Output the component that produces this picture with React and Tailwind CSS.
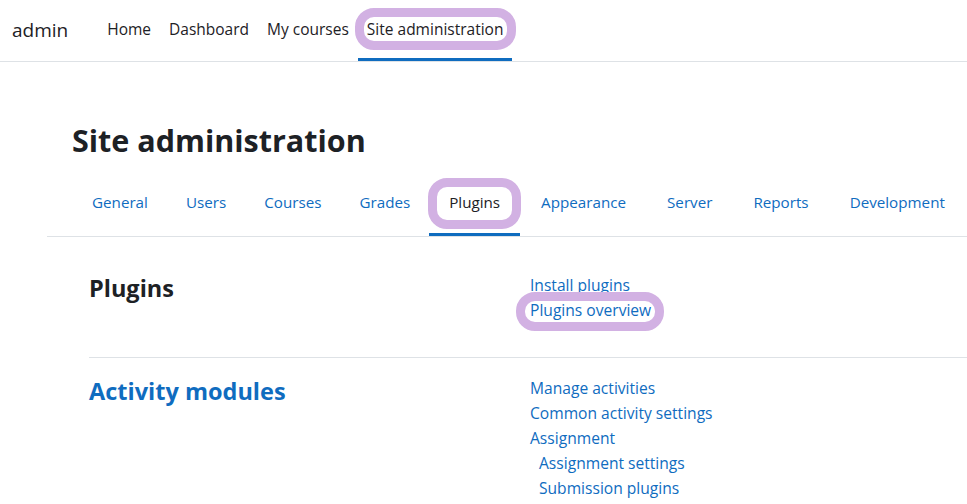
import React from 'react';

const navItems = ['Home', 'Dashboard', 'My courses', 'Site administration'];
const tabs = [
    { label: 'General', pad: 'px-[19px]' },
    { label: 'Users', pad: 'px-[19px]' },
    { label: 'Courses', pad: 'px-[19px]' },
    { label: 'Grades', pad: 'px-[19px]' },
    { label: 'Plugins', pad: 'px-[20px]' },
    { label: 'Appearance', pad: 'px-[21px]' },
    { label: 'Server', pad: 'px-[20px]' },
    { label: 'Reports', pad: 'px-[21px]' },
    { label: 'Development', pad: 'px-[20px]' },
];

const Ring = ({ className }) => (
    <span className={`pointer-events-none absolute rounded-[19px] border-[9px] border-[#d2b1e3] ${className}`} />
);

const App = () => {
    return (
        <div className="w-full min-h-[504px] bg-white text-[#1d2125] overflow-hidden" style={{ fontFamily: '"Open Sans", "Noto Sans", sans-serif' }}>
            {/* top navbar */}
            <div className="h-[62px] flex items-stretch border-b border-[#dee2e6]">
                <div className="flex items-center pl-3 pr-[30px] text-[19px]">admin</div>
                <nav className="flex items-stretch">
                    {navItems.map((item) => {
                        const active = item === 'Site administration';
                        return (
                            <div key={item} className={`relative flex items-center px-[9px] pt-[1px] text-[15.5px] border-b-[3px] ${active ? 'border-[#0f6cbf]' : 'border-transparent'}`}>
                                <span className="relative z-10">{item}</span>
                                {active && <Ring className="-left-[3px] -right-[4px] top-[8px] h-[42px]" />}
                            </div>
                        );
                    })}
                </nav>
            </div>

            {/* page header */}
            <div className="pl-[47px]">
                <h1 className="pl-[25px] pt-[58px] text-[30.5px] font-bold leading-[40px]">Site administration</h1>
                <div className="mt-[20px] flex border-b border-[#dee2e6] pl-[26px]">
                    {tabs.map(({ label, pad }) => {
                        const active = label === 'Plugins';
                        return (
                            <div key={label} className={`relative h-[56px] flex items-center ${pad} pb-[8px] text-[15.2px] border-b-[3px] ${active ? 'border-[#0f6cbf] text-[#1d2125]' : 'border-transparent text-[#0f6cbf]'}`}>
                                <span className="relative z-10">{label}</span>
                                {active && <Ring className="-left-[1px] -right-[1px] -top-[2px] h-[51px]" />}
                            </div>
                        );
                    })}
                </div>
            </div>

            {/* sections */}
            <div className="pl-[89px]">
                <div className="flex pt-[36px] pb-[34px] border-b border-[#dee2e6]">
                    <h2 className="w-[441px] text-[23.5px] font-bold leading-[30px]">Plugins</h2>
                    <div className="flex flex-col text-[15.6px] leading-[25px] text-[#0f6cbf]">
                        <span>Install plugins</span>
                        <span className="relative self-start">
                            <span className="relative z-10">Plugins overview</span>
                            <Ring className="-left-[14px] -right-[13px] -top-[6px] h-[39px]" />
                        </span>
                    </div>
                </div>
                <div className="flex pt-[18px]">
                    <h2 className="w-[441px] text-[23.5px] font-bold leading-[30px] text-[#0f6cbf]">Activity modules</h2>
                    <div className="flex flex-col text-[15.6px] leading-[25px] text-[#0f6cbf]">
                        <span>Manage activities</span>
                        <span>Common activity settings</span>
                        <span>Assignment</span>
                        <span className="pl-[9px]">Assignment settings</span>
                        <span className="pl-[9px]">Submission plugins</span>
                    </div>
                </div>
            </div>
        </div>
    );
};

export default App;
